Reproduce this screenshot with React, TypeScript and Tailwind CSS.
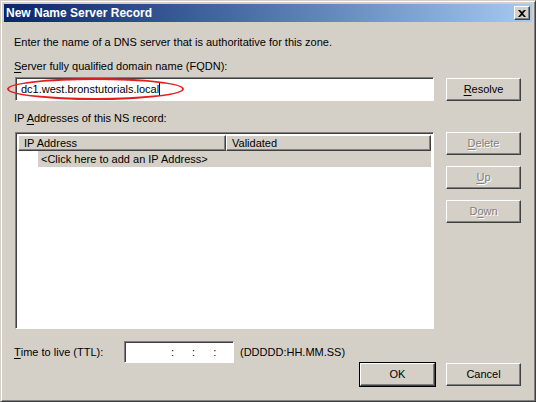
import React from "react";

const font = { fontFamily: '"Liberation Sans", Arial, sans-serif' };

const raised =
  "border border-t-white border-l-white border-r-[#404040] border-b-[#404040] shadow-[inset_-1px_-1px_0_#808080]";
const sunken =
  "border border-t-[#808080] border-l-[#808080] border-r-white border-b-white shadow-[inset_1px_1px_0_#404040]";

const Btn = ({
  children,
  disabled,
  def,
  className = "",
}: {
  children: React.ReactNode;
  disabled?: boolean;
  def?: boolean;
  className?: string;
}) => (
  <div
    className={`w-[75px] h-[23px] flex items-center justify-center bg-[#d4d0c8] ${
      def ? "outline outline-1 outline-black" : ""
    } ${raised} ${
      disabled ? "text-[#808080] [text-shadow:1px_1px_0_#fff]" : "text-black"
    } ${className}`}
  >
    {children}
  </div>
);

const U = ({ children }: { children: React.ReactNode }) => <span className="underline underline-offset-2">{children}</span>;

export default function App() {
  return (
    <div className="w-[536px] h-[402px] bg-[#d4d0c8] text-[11px] leading-[13px] text-black" style={font}>
      <div className="w-full h-full p-[3px] border border-t-[#d4d0c8] border-l-[#d4d0c8] border-r-[#404040] border-b-[#404040] shadow-[inset_1px_1px_0_#fff,inset_-1px_-1px_0_#808080] flex flex-col">
        {/* title bar */}
        <div className="h-[18px] flex items-center justify-between pl-[2px] pr-[2px] bg-gradient-to-r from-[#0a246a] to-[#a6caf0]">
          <span className="text-white font-bold text-[12px]">New Name Server Record</span>
          <div className={`w-[16px] h-[14px] bg-[#d4d0c8] flex items-center justify-center ${raised}`}>
            <svg width="8" height="7" viewBox="0 0 8 7">
              <path d="M0 0h2l2 2 2-2h2L5 3.5 8 7H6L4 5 2 7H0l3-3.5z" fill="#000" />
            </svg>
          </div>
        </div>

        {/* body */}
        <div className="flex-1 flex flex-col pl-[10px] pr-[11px]">
          <div className="mt-[14px] h-[13px]">Enter the name of a DNS server that is authoritative for this zone.</div>
          <div className="mt-[11px] h-[13px]">
            <U>S</U>erver fully qualified domain name (FQDN):
          </div>

          <div className="mt-[4px] flex items-start">
            <div className="relative ml-[1px]">
              <div className={`w-[419px] h-[24px] bg-white flex items-center pl-[5px] ${sunken}`}>
                <span>dc1.west.bronstutorials.local</span>
                <span className="w-px h-[13px] bg-black" />
              </div>
              <div className="absolute left-[-8px] top-[1px] w-[177px] h-[22px] rounded-[50%] border-2 border-[#e41e1e]" />
            </div>
            <Btn className="ml-[12px] mt-[1px]">
              <U>R</U>esolve
            </Btn>
          </div>

          <div className="mt-[11px] h-[13px]">
            IP <U>A</U>ddresses of this NS record:
          </div>

          <div className="mt-[7px] flex items-start">
            <div className={`ml-[1px] w-[419px] h-[197px] bg-white p-[2px] ${sunken}`}>
              <div className="flex h-[16px]">
                <div className={`w-[208px] bg-[#d4d0c8] pl-[5px] flex items-center ${raised}`}>IP Address</div>
                <div className={`flex-1 bg-[#d4d0c8] pl-[5px] flex items-center ${raised}`}>Validated</div>
              </div>
              <div className="flex h-[16px]">
                <div className="w-[20px]" />
                <div className="flex-1 bg-[#d4d0c8] pl-[3px] flex items-center">&lt;Click here to add an IP Address&gt;</div>
              </div>
            </div>
            <div className="ml-[12px] flex flex-col gap-[11px]">
              <Btn disabled>
                <U>D</U>elete
              </Btn>
              <Btn disabled>
                <U>U</U>p
              </Btn>
              <Btn disabled>
                D<U>o</U>wn
              </Btn>
            </div>
          </div>

          <div className="mt-[12px] flex items-start">
            <div className="w-[110px] h-[22px] flex items-center">
              <U>T</U>ime to live (TTL):
            </div>
            <div className={`w-[110px] h-[22px] bg-white flex items-center ${sunken}`}>
              <span className="ml-[46px]">:</span>
              <span className="ml-[18px]">:</span>
              <span className="ml-[18px]">:</span>
            </div>
            <div className="ml-[6px] h-[22px] flex items-center">(DDDDD:HH.MM.SS)</div>
          </div>

          <div className="mt-[0px] flex justify-end gap-[11px]">
            <Btn def>OK</Btn>
            <Btn>Cancel</Btn>
          </div>
        </div>
      </div>
    </div>
  );
}
